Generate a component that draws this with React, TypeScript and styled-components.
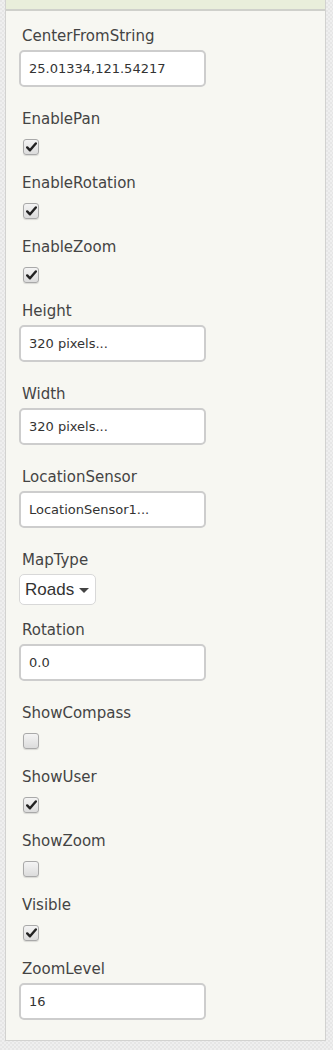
import styled, { createGlobalStyle } from 'styled-components';

type Prop =
  | { name: string; kind: 'text'; value: string }
  | { name: string; kind: 'check'; checked: boolean }
  | { name: string; kind: 'choice'; value: string };

const PROPERTIES: Prop[] = [
  { name: 'CenterFromString', kind: 'text', value: '25.01334,121.54217' },
  { name: 'EnablePan', kind: 'check', checked: true },
  { name: 'EnableRotation', kind: 'check', checked: true },
  { name: 'EnableZoom', kind: 'check', checked: true },
  { name: 'Height', kind: 'text', value: '320 pixels...' },
  { name: 'Width', kind: 'text', value: '320 pixels...' },
  { name: 'LocationSensor', kind: 'text', value: 'LocationSensor1...' },
  { name: 'MapType', kind: 'choice', value: 'Roads' },
  { name: 'Rotation', kind: 'text', value: '0.0' },
  { name: 'ShowCompass', kind: 'check', checked: false },
  { name: 'ShowUser', kind: 'check', checked: true },
  { name: 'ShowZoom', kind: 'check', checked: false },
  { name: 'Visible', kind: 'check', checked: true },
  { name: 'ZoomLevel', kind: 'text', value: '16' },
];

export default function App() {
  return (
    <>
      <GlobalStyle />
      <Page>
        <Panel>
          <PanelHeader />
          <PropertyList>
            {PROPERTIES.map((p) => (
              <Property key={p.name}>
                <PropertyLabel>{p.name}</PropertyLabel>
                {p.kind === 'text' && <TextBox>{p.value}</TextBox>}
                {p.kind === 'check' && (
                  <CheckBox>
                    {p.checked && (
                      <svg width="11" height="10" viewBox="0 0 11 10">
                        <path
                          d="M1.2 5.4 L4 8.3 L9.8 1.4"
                          fill="none"
                          stroke="#222"
                          strokeWidth="2.4"
                          strokeLinecap="round"
                          strokeLinejoin="round"
                        />
                      </svg>
                    )}
                  </CheckBox>
                )}
                {p.kind === 'choice' && (
                  <Dropdown>
                    {p.value}
                    <Caret />
                  </Dropdown>
                )}
              </Property>
            ))}
          </PropertyList>
        </Panel>
      </Page>
    </>
  );
}

const GlobalStyle = createGlobalStyle`
  html, body {
    margin: 0;
    padding: 0;
  }
  body {
    font-family: "DejaVu Sans", "Liberation Sans", sans-serif;
    background-color: #e6e6e6;
    background-image:
      linear-gradient(45deg, rgba(255,255,255,0.35) 25%, transparent 25%, transparent 75%, rgba(255,255,255,0.35) 75%),
      linear-gradient(45deg, rgba(255,255,255,0.35) 25%, transparent 25%, transparent 75%, rgba(255,255,255,0.35) 75%);
    background-size: 4px 4px;
    background-position: 0 0, 2px 2px;
  }
`;

const Page = styled.div`
  width: 333px;
  height: 1050px;
  padding: 0 7px 0 5px;
  box-sizing: border-box;
`;

const Panel = styled.div`
  background: #f7f7f2;
  border: 1px solid #d2d2d0;
  border-top: none;
  box-sizing: border-box;
`;

const PanelHeader = styled.div`
  height: 9px;
  background: #e9eedb;
  border-bottom: 2px solid #cfd0cb;
`;

const PropertyList = styled.div`
  display: flex;
  flex-direction: column;
  padding: 15px 0 0 13px;
  margin-bottom: -2px;
`;

const Property = styled.div`
  display: flex;
  flex-direction: column;
  align-items: flex-start;
`;

const PropertyLabel = styled.div`
  font-size: 15px;
  line-height: 20px;
  color: #444;
  padding-left: 3px;
`;

const TextBox = styled.div`
  width: 187px;
  height: 37px;
  box-sizing: border-box;
  margin: 4px 0 22px;
  padding: 0 8px;
  display: flex;
  align-items: center;
  background: #fff;
  border: 2px solid #cdcdcd;
  border-radius: 5px;
  font-size: 13px;
  color: #333;
  white-space: nowrap;
`;

const CheckBox = styled.div`
  width: 16px;
  height: 16px;
  box-sizing: border-box;
  margin: 10px 0 18px 4px;
  display: flex;
  align-items: center;
  justify-content: center;
  border: 1px solid #a9a9a9;
  border-radius: 3px;
  background: linear-gradient(#f4f4f4, #dcdcdc);
  box-shadow: 0 1px 1px rgba(0, 0, 0, 0.12);
`;

const Dropdown = styled.div`
  height: 31px;
  box-sizing: border-box;
  margin: 4px 0 15px;
  padding: 0 6px 0 5px;
  display: flex;
  align-items: center;
  gap: 5px;
  background: #fff;
  border: 1px solid #d8d8d8;
  border-radius: 5px;
  font-family: "Liberation Sans", Arial, sans-serif;
  font-size: 17px;
  color: #333;
`;

const Caret = styled.span`
  width: 0;
  height: 0;
  border-left: 5px solid transparent;
  border-right: 5px solid transparent;
  border-top: 5px solid #444;
  margin-top: 2px;
`;
